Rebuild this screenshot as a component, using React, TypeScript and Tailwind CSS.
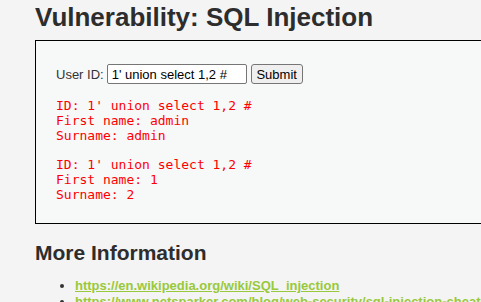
export default function App() {
  const results = [
    { id: "1' union select 1,2 #", first: 'admin', last: 'admin' },
    { id: "1' union select 1,2 #", first: '1', last: '2' },
  ];

  return (
    <div className="w-[481px] h-[302px] overflow-hidden bg-[#f4f4f4] text-[#333] font-['Liberation_Sans',Arial,sans-serif] text-[13px] pl-[35px] pt-[2px]">
      <h1 className="text-[26px] font-bold leading-[30px] text-[#2d2d2d] whitespace-nowrap">
        Vulnerability: SQL Injection
      </h1>

      <div className="mt-[8px] w-[700px] border border-black bg-[#f7f8f8] pl-[20px] pt-[23px] pb-[21px]">
        <form className="flex items-center h-[20px]" onSubmit={(e) => e.preventDefault()}>
          <label className="text-[#333] leading-[15px] mr-[3px]">User ID:</label>
          <input
            type="text"
            defaultValue="1' union select 1,2 #"
            className="w-[140px] h-[20px] border border-[#767676] rounded-[2px] bg-white px-[4px] text-[13px] text-black outline-none"
          />
          <button
            type="submit"
            className="ml-[4px] h-[20px] w-[52px] border border-[#767676] rounded-[3px] bg-[#efefef] text-[13px] text-black leading-none"
          >
            Submit
          </button>
        </form>

        {results.map((r, i) => (
          <pre
            key={i}
            className="mt-[14px] font-['DejaVu_Sans_Mono',monospace] text-[13px] leading-[15px] text-[#ff0000]"
          >
            {`ID: ${r.id}\nFirst name: ${r.first}\nSurname: ${r.last}`}
          </pre>
        ))}
      </div>

      <h2 className="mt-[17px] text-[21px] font-bold leading-[24px] text-[#2d2d2d]">More Information</h2>

      <ul className="mt-[13px] list-disc pl-[40px] leading-[16px] whitespace-nowrap marker:text-[#333]">
        <li>
          <a href="#" className="font-bold text-[#98c93c] underline">
            https://en.wikipedia.org/wiki/SQL_injection
          </a>
        </li>
        <li>
          <a href="#" className="font-bold text-[#98c93c] underline">
            https://www.netsparker.com/blog/web-security/sql-injection-cheat-sheet/
          </a>
        </li>
      </ul>
    </div>
  );
}
